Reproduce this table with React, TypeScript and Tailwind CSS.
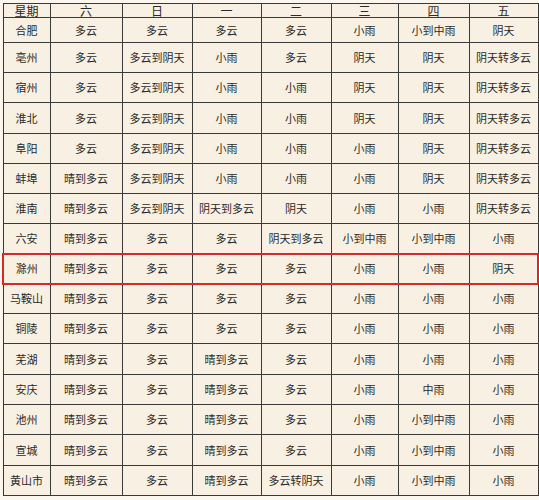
const HEAD = ["星期", "六", "日", "一", "二", "三", "四", "五"];
const WIDTHS = ["w-[47px]", "w-[72px]", "w-[70px]", "w-[69px]", "w-[70px]", "w-[67px]", "w-[71px]", "w-[69px]"];

const ROWS: string[][] = [
  ["合肥", "多云", "多云", "多云", "多云", "小雨", "小到中雨", "阴天"],
  ["亳州", "多云", "多云到阴天", "小雨", "多云", "阴天", "阴天", "阴天转多云"],
  ["宿州", "多云", "多云到阴天", "小雨", "小雨", "阴天", "阴天", "阴天转多云"],
  ["淮北", "多云", "多云到阴天", "小雨", "小雨", "阴天", "阴天", "阴天转多云"],
  ["阜阳", "多云", "多云到阴天", "小雨", "小雨", "小雨", "阴天", "阴天转多云"],
  ["蚌埠", "晴到多云", "多云到阴天", "小雨", "小雨", "小雨", "阴天", "阴天转多云"],
  ["淮南", "晴到多云", "多云到阴天", "阴天到多云", "阴天", "小雨", "小雨", "阴天转多云"],
  ["六安", "晴到多云", "多云", "多云", "阴天到多云", "小到中雨", "小到中雨", "小雨"],
  ["滁州", "晴到多云", "多云", "多云", "多云", "小雨", "小雨", "阴天"],
  ["马鞍山", "晴到多云", "多云", "多云", "多云", "小雨", "小雨", "小雨"],
  ["铜陵", "晴到多云", "多云", "多云", "多云", "小雨", "小雨", "小雨"],
  ["芜湖", "晴到多云", "多云", "晴到多云", "多云", "小雨", "小雨", "小雨"],
  ["安庆", "晴到多云", "多云", "晴到多云", "多云", "小雨", "中雨", "小雨"],
  ["池州", "晴到多云", "多云", "晴到多云", "多云", "小雨", "小到中雨", "小雨"],
  ["宣城", "晴到多云", "多云", "晴到多云", "多云", "小雨", "小到中雨", "小雨"],
  ["黄山市", "晴到多云", "多云", "晴到多云", "多云转阴天", "小雨", "小到中雨", "小雨"],
];

// 滁州 row gets the red frame
const HIGHLIGHT = 8;
// a few rows are a pixel taller, so the table reaches y≈495
const TALL = [3, 11, 14];

export default function App() {
  return (
    <div className="w-[539px] h-[500px] bg-[#fbf7ef] pt-[3px] pl-[2px] font-['Noto_Sans_CJK_SC',sans-serif] text-[11px] text-[#2a2a2a]">
      <table className="border-collapse table-fixed bg-[#f8f0e2] border border-[#3a3a3a]">
        <thead>
          <tr className="h-[14px]">
            {HEAD.map((h, i) => (
              <th
                key={h}
                className={`${WIDTHS[i]} border border-[#3a3a3a] font-normal text-[12px] leading-[12px] p-0 text-center`}
              >
                {h}
              </th>
            ))}
          </tr>
        </thead>
        <tbody>
          {ROWS.map((row, r) => {
            const hl = r === HIGHLIGHT;
            return (
              <tr key={row[0]} className={r === 0 ? "h-[25px]" : TALL.includes(r) ? "h-[31px]" : "h-[30px]"}>
                {row.map((cell, c) => (
                  <td
                    key={c}
                    className={`border border-[#3a3a3a] p-0 text-center leading-none whitespace-nowrap ${
                      hl ? "border-t-2 border-b-2 border-t-[#d42a2a] border-b-[#d42a2a]" : ""
                    } ${hl && c === 0 ? "border-l-2 border-l-[#d42a2a]" : ""} ${
                      hl && c === row.length - 1 ? "border-r-2 border-r-[#d42a2a]" : ""
                    }`}
                  >
                    {cell}
                  </td>
                ))}
              </tr>
            );
          })}
        </tbody>
      </table>
    </div>
  );
}
